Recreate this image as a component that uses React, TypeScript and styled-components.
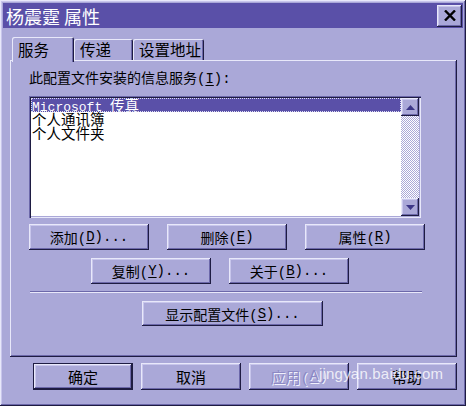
import React from "react";
import styled, { createGlobalStyle, css } from "styled-components";

// Palette (lavender Win9x scheme)
const face = "#aaa8d8";
const light = "#e8e8fa";
const mid = "#c8c6ec";
const shadow = "#6c68aa";
const dark = "#1e1c42";
const titleBg = "#5a50a8";

const GlobalStyle = createGlobalStyle`
  html, body {
    margin: 0;
    padding: 0;
    background: ${face};
  }
  body {
    font-family: "Liberation Mono", "Noto Sans CJK SC", monospace;
    color: #000;
  }
`;

const raised = css`
  box-shadow: inset -1px -1px ${dark}, inset 1px 1px ${light},
    inset -2px -2px ${shadow}, inset 2px 2px ${mid};
`;

const defaultRaised = css`
  box-shadow: inset 0 0 0 1px ${dark}, inset -2px -2px ${dark},
    inset 2px 2px ${light}, inset -3px -3px ${shadow}, inset 3px 3px ${mid};
`;

// Components
const Window = styled.div`
  position: relative;
  width: 466px;
  height: 406px;
  box-sizing: border-box;
  padding: 3px;
  background: ${face};
  display: flex;
  flex-direction: column;
  ${raised};
`;

const TitleBar = styled.div`
  height: 25px;
  flex: none;
  background: ${titleBg};
  display: flex;
  align-items: center;
  justify-content: space-between;
  padding-left: 3px;
`;

const TitleText = styled.span`
  color: #fff;
  font-family: "Noto Sans CJK SC", sans-serif;
  font-size: 18px;
  line-height: 22px;
  white-space: pre;
`;

const CloseButton = styled.div`
  width: 25px;
  height: 22px;
  margin-right: 1px;
  background: ${face};
  display: flex;
  align-items: center;
  justify-content: center;
  ${raised};
`;

const Body = styled.div`
  flex: 1;
  padding: 9px 6px 0 7px;
  display: flex;
  flex-direction: column;
`;

const TabStrip = styled.div`
  height: 23px;
  display: flex;
  align-items: flex-end;
  padding-left: 2px;
  position: relative;
  z-index: 1;
`;

const Tab = styled.div<{ $active?: boolean; $w: number }>`
  width: ${(p) => p.$w}px;
  height: ${(p) => (p.$active ? 25 : 21)}px;
  margin-bottom: ${(p) => (p.$active ? -2 : 0)}px;
  box-sizing: border-box;
  padding: ${(p) => (p.$active ? 3 : 1)}px 0 0 6px;
  background: ${face};
  font-family: "Noto Sans CJK SC", sans-serif;
  font-size: 15.5px;
  line-height: 18px;
  border-radius: 2px 2px 0 0;
  box-shadow: inset 1px 1px ${light}, inset -1px 0 ${dark},
    inset -2px 0 ${shadow};
`;

const Panel = styled.div`
  height: 297px;
  box-sizing: border-box;
  padding: 11px 0 0 19px;
  display: flex;
  flex-direction: column;
  box-shadow: inset -1px -1px ${dark}, inset 1px 1px ${light},
    inset -2px -2px ${shadow};
`;

const Label = styled.div`
  height: 16px;
  font-size: 14px;
  line-height: 16px;
  margin-bottom: 9px;
  white-space: pre;
`;

const U = styled.span`
  text-decoration: underline;
  text-underline-offset: 2px;
`;

const ListBox = styled.div`
  width: 392px;
  height: 122px;
  box-sizing: border-box;
  padding: 2px;
  background: #fff;
  display: flex;
  box-shadow: inset 1px 1px ${shadow}, inset 2px 2px ${dark},
    inset -1px -1px ${light}, inset -2px -2px ${face};
`;

const Items = styled.div`
  flex: 1;
  display: flex;
  flex-direction: column;
`;

const Item = styled.div<{ $selected?: boolean }>`
  height: 14px;
  line-height: 14px;
  padding-left: 1px;
  font-family: "Liberation Mono", "Noto Sans CJK SC", monospace;
  font-size: 13px;
  white-space: pre;
  ${(p) =>
    p.$selected &&
    css`
      background: ${titleBg};
      color: #fff;
      outline: 1px dotted #dcdcf4;
      outline-offset: -1px;
    `}
`;

const Cjk = styled.span`
  font-family: "Noto Sans CJK SC", sans-serif;
  font-size: 14.5px;
`;

const ScrollBar = styled.div`
  width: 18px;
  display: flex;
  flex-direction: column;
  justify-content: space-between;
  background-color: #fff;
  background-image: repeating-conic-gradient(${face} 0 25%, #fff 0 50%);
  background-size: 2px 2px;
`;

const ScrollButton = styled.div`
  width: 18px;
  height: 18px;
  background: ${face};
  display: flex;
  align-items: center;
  justify-content: center;
  ${raised};
`;

const ButtonRow = styled.div<{ $indent?: number; $top: number }>`
  display: flex;
  gap: 18px;
  margin-top: ${(p) => p.$top}px;
  margin-left: ${(p) => p.$indent ?? 0}px;
`;

const PushButton = styled.div<{
  $w: number;
  $h?: number;
  $default?: boolean;
  $disabled?: boolean;
  $big?: boolean;
}>`
  width: ${(p) => p.$w}px;
  height: ${(p) => p.$h ?? 26}px;
  box-sizing: border-box;
  background: ${face};
  display: flex;
  align-items: center;
  justify-content: center;
  font-family: "Liberation Mono", "Noto Sans CJK SC", monospace;
  font-size: ${(p) => (p.$big ? 15 : 14)}px;
  white-space: pre;
  ${(p) => (p.$default ? defaultRaised : raised)};
  ${(p) =>
    p.$disabled &&
    css`
      color: #8c88c4;
      text-shadow: 1px 1px 0 #f0f0fc;
    `}
`;

const Separator = styled.div`
  width: 392px;
  height: 0;
  margin: 7px 0 0 1px;
  border-top: 1px solid ${shadow};
  border-bottom: 1px solid ${light};
`;

const Footer = styled.div`
  display: flex;
  justify-content: flex-end;
  gap: 8px;
  margin-top: 6px;
`;

const Watermark = styled.div`
  position: absolute;
  left: 319px;
  top: 365px;
  color: rgba(255, 255, 255, 0.8);
  font-family: "Liberation Sans", sans-serif;
  font-size: 15px;
  letter-spacing: 0.2px;
  pointer-events: none;
`;

const Arrow = ({ up }: { up?: boolean }) => (
  <svg width="9" height="5" viewBox="0 0 9 5">
    <polygon
      points={up ? "4.5,0 9,5 0,5" : "0,0 9,0 4.5,5"}
      fill="#3c3688"
    />
  </svg>
);

export default function App() {
  return (
    <>
      <GlobalStyle />
      <Window>
        <TitleBar>
          <TitleText>杨震霆 属性</TitleText>
          <CloseButton>
            <svg width="12" height="11" viewBox="0 0 12 11">
              <path d="M1 0.5 L11 10.5 M11 0.5 L1 10.5" stroke="#000" strokeWidth="2.4" />
            </svg>
          </CloseButton>
        </TitleBar>
        <Body>
          <TabStrip>
            <Tab $active $w={62}>服务</Tab>
            <Tab $w={59}>传递</Tab>
            <Tab $w={71}>设置地址</Tab>
          </TabStrip>
          <Panel>
            <Label>
              此配置文件安装的信息服务(<U>I</U>):
            </Label>
            <ListBox>
              <Items>
                <Item $selected>
                  Microsoft <Cjk>传真</Cjk>
                </Item>
                <Item>
                  <Cjk>个人通讯簿</Cjk>
                </Item>
                <Item>
                  <Cjk>个人文件夹</Cjk>
                </Item>
              </Items>
              <ScrollBar>
                <ScrollButton>
                  <Arrow up />
                </ScrollButton>
                <ScrollButton>
                  <Arrow />
                </ScrollButton>
              </ScrollBar>
            </ListBox>
            <ButtonRow $top={6}>
              <PushButton $w={120}>
                添加(<U>D</U>)...
              </PushButton>
              <PushButton $w={120}>
                删除(<U>E</U>)
              </PushButton>
              <PushButton $w={120}>
                属性(<U>R</U>)
              </PushButton>
            </ButtonRow>
            <ButtonRow $top={8} $indent={62}>
              <PushButton $w={120}>
                复制(<U>Y</U>)...
              </PushButton>
              <PushButton $w={120}>
                关于(<U>B</U>)...
              </PushButton>
            </ButtonRow>
            <Separator />
            <ButtonRow $top={8} $indent={113}>
              <PushButton $w={181} $h={25}>
                显示配置文件(<U>S</U>)...
              </PushButton>
            </ButtonRow>
          </Panel>
          <Footer>
            <PushButton $w={100} $h={27} $big $default>
              确定
            </PushButton>
            <PushButton $w={100} $h={27} $big>
              取消
            </PushButton>
            <PushButton $w={100} $h={27} $big $disabled>
              应用(<U>A</U>)
            </PushButton>
            <PushButton $w={100} $h={27} $big>
              帮助
            </PushButton>
          </Footer>
        </Body>
        <Watermark>jingyan.baidu.com</Watermark>
      </Window>
    </>
  );
}
